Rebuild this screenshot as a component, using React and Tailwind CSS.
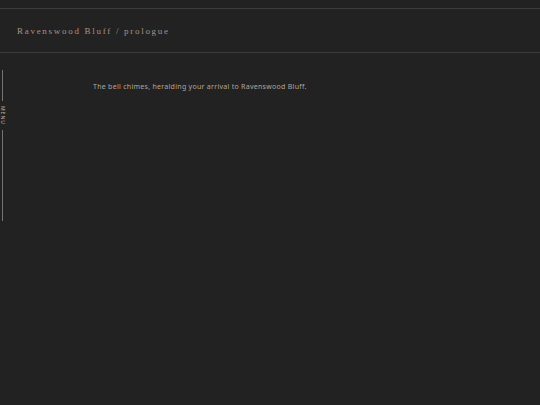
export default function App() {
  return (
    <div className="min-h-screen bg-[#222222] pt-2 text-[#b3a69a]">
      <PageHeader title="Ravenswood Bluff / prologue" />
      <div className="flex items-start pt-[17px]">
        <MenuTab />
        <main className="min-w-0 flex-1 pt-3 pl-[88px]">
          <Passage>The bell chimes, heralding your arrival to Ravenswood Bluff.</Passage>
        </main>
      </div>
    </div>
  );
}

function PageHeader({ title }) {
  return (
    <header className="border-y border-[#3c3c3c] px-[17px] pt-4 pb-[14px]">
      <h1 className="font-['Liberation_Serif',serif] text-[9px] leading-[13px] tracking-[0.19em] text-[#ab9182]">
        {title}
      </h1>
    </header>
  );
}

// Collapsed side menu: a thin rule above and below the rotated label.
function MenuTab() {
  return (
    <button
      type="button"
      className="flex w-[5px] flex-col items-center font-['Open_Sans',sans-serif] text-[5px] leading-[5px] font-semibold tracking-[1px] text-[#b09a88]"
    >
      <span className="h-[31px] w-px bg-[#777473]" />
      <span className="flex h-[29px] items-center justify-center">
        <span className="[writing-mode:vertical-rl]">MENU</span>
      </span>
      <span className="h-[91px] w-px bg-[#777473]" />
    </button>
  );
}

function Passage({ children }) {
  return (
    <p className="font-['Noto_Sans',sans-serif] text-[7px] leading-[10px] tracking-[0.04em]">
      {children}
    </p>
  );
}
